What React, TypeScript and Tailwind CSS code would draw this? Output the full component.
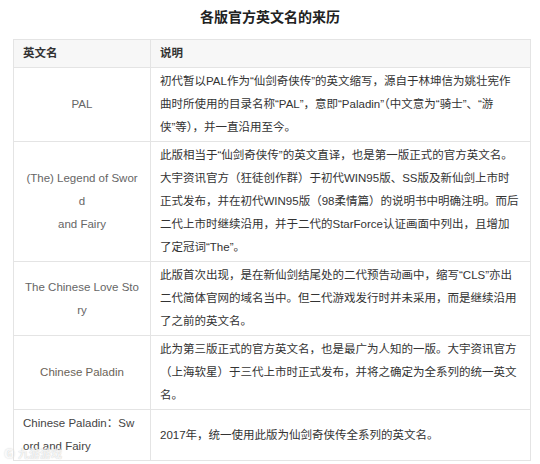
import React from "react";

type Row = { left: string[]; leftAlign: "center" | "left"; leftColor: string; right: string[] };

const rows: Row[] = [
  {
    left: ["PAL"],
    leftAlign: "center",
    leftColor: "text-[#666666]",
    right: [
      "初代暂以PAL作为“仙剑奇侠传”的英文缩写，源自于林坤信为姚壮宪作",
      "曲时所使用的目录名称“PAL”，意即“Paladin”（中文意为“骑士”、“游",
      "侠”等），并一直沿用至今。",
    ],
  },
  {
    left: ["(The) Legend of Swor", "d", "and Fairy"],
    leftAlign: "center",
    leftColor: "text-[#666666]",
    right: [
      "此版相当于“仙剑奇侠传”的英文直译，也是第一版正式的官方英文名。",
      "大宇资讯官方（狂徒创作群）于初代WIN95版、SS版及新仙剑上市时",
      "正式发布，并在初代WIN95版（98柔情篇）的说明书中明确注明。而后",
      "二代上市时继续沿用，并于二代的StarForce认证画面中列出，且增加",
      "了定冠词“The”。",
    ],
  },
  {
    left: ["The Chinese Love Sto", "ry"],
    leftAlign: "center",
    leftColor: "text-[#666666]",
    right: [
      "此版首次出现，是在新仙剑结尾处的二代预告动画中，缩写“CLS”亦出",
      "二代简体官网的域名当中。但二代游戏发行时并未采用，而是继续沿用",
      "了之前的英文名。",
    ],
  },
  {
    left: ["Chinese Paladin"],
    leftAlign: "center",
    leftColor: "text-[#6b6357]",
    right: [
      "此为第三版正式的官方英文名，也是最广为人知的一版。大宇资讯官方",
      "（上海软星）于三代上市时正式发布，并将之确定为全系列的统一英文",
      "名。",
    ],
  },
  {
    left: ["Chinese Paladin：Sw", "ord and Fairy"],
    leftAlign: "left",
    leftColor: "text-[#444444]",
    right: ["2017年，统一使用此版为仙剑奇侠传全系列的英文名。"],
  },
];

export default function App() {
  return (
    <div
      className="relative w-[540px] h-[464px] bg-white overflow-hidden"
      style={{ fontFamily: '"Liberation Sans", Arial, "Noto Sans CJK SC", sans-serif' }}
    >
      <div className="h-[39px] flex items-center justify-center pb-[5px]">
        <h1 className="text-[14px] font-bold text-[#222222] leading-none">各版官方英文名的来历</h1>
      </div>
      <table className="ml-[13px] w-[517px] border-collapse table-fixed text-[11.5px] leading-[23px]">
        <colgroup>
          <col className="w-[137px]" />
          <col className="w-[380px]" />
        </colgroup>
        <thead>
          <tr className="bg-[#f7f7f7]">
            <th className="border border-[#e4e4e4] px-[9px] py-[2px] text-left font-bold text-[#333333]">英文名</th>
            <th className="border border-[#e4e4e4] px-[9px] py-[2px] text-left font-bold text-[#333333]">说明</th>
          </tr>
        </thead>
        <tbody>
          {rows.map((r, i) => (
            <tr key={i}>
              <td
                className={`border border-[#e4e4e4] px-[9px] py-[2px] align-middle whitespace-nowrap ${r.leftColor} ${
                  r.leftAlign === "center" ? "text-center" : "text-left"
                }`}
              >
                {r.left.map((l, j) => (
                  <div key={j}>{l}</div>
                ))}
              </td>
              <td className="border border-[#e4e4e4] px-[9px] py-[2px] align-middle whitespace-nowrap text-[#333333]">
                {r.right.map((l, j) => (
                  <div key={j}>{l}</div>
                ))}
              </td>
            </tr>
          ))}
        </tbody>
      </table>
      <div
        className="absolute left-[4px] bottom-[4px] text-[11px] font-bold text-white/80 leading-none"
        style={{ textShadow: "0 0 1px rgba(0,0,0,0.25)" }}
      >
        ⑥ 九游游戏
      </div>
    </div>
  );
}
